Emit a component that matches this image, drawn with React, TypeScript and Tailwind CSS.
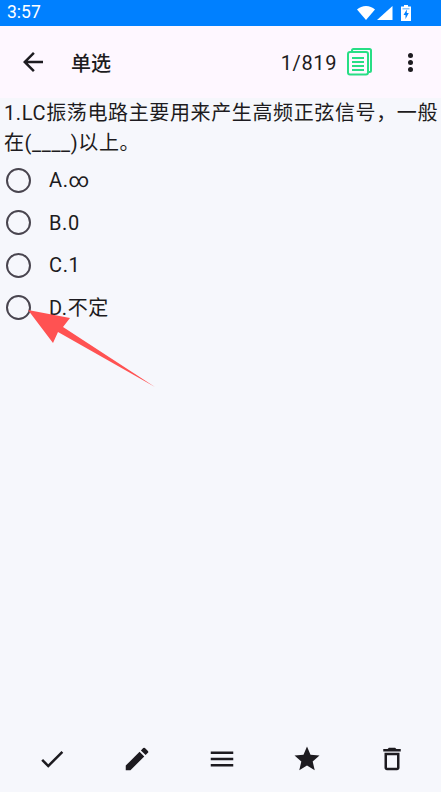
const options = ["A.∞", "B.0", "C.1", "D.不定"];

function Icon({ d, size = 30, className = "" }: { d: string; size?: number; className?: string }) {
  return (
    <svg width={size} height={size} viewBox="0 0 24 24" fill="currentColor" className={className}>
      <path d={d} />
    </svg>
  );
}

const toolbarIcons = [
  "M9 16.17 4.83 12l-1.42 1.41L9 19 21 7l-1.41-1.41z",
  "M3 17.25V21h3.75L17.81 9.94l-3.75-3.75L3 17.25zM20.71 7.04a1 1 0 0 0 0-1.41l-2.34-2.34a1 1 0 0 0-1.41 0l-1.83 1.83 3.75 3.75 1.83-1.83z",
  "M3 18h18v-2H3v2zm0-5h18v-2H3v2zm0-7v2h18V6H3z",
  "M12 17.27 18.18 21l-1.64-7.03L22 9.24l-7.19-.61L12 2 9.19 8.63 2 9.24l5.46 4.73L5.82 21z",
  "M16 9v10H8V9h8m-1.5-6h-5l-1 1H5v2h14V4h-3.5l-1-1zM18 7H6v12c0 1.1.9 2 2 2h8c1.1 0 2-.9 2-2V7z",
];

export default function App() {
  return (
    <div className="relative flex h-[792px] w-[441px] flex-col overflow-hidden bg-[#f6f7fc] font-['Roboto','Noto_Sans_CJK_SC',sans-serif] text-[#1d1b20]">
      {/* Status bar */}
      <div className="flex h-[26px] items-center justify-between bg-[#0080ff] pl-[7px] pr-[30px] text-white">
        <span className="text-[17.500px] leading-none">3:57</span>
        <div className="flex items-center gap-[2px]">
          <svg width="18" height="14" viewBox="0 0 18 14" fill="currentColor">
            <path d="M0 3.500C2.500 1.300 5.600 0 9 0s6.500 1.300 9 3.500L9 14z" />
          </svg>
          <svg width="16" height="14" viewBox="0 0 16 14" fill="currentColor">
            <path d="M15.500 0v14H0z" />
          </svg>
          <svg width="10" height="16" viewBox="0 0 10 16" className="ml-[6px]">
            <path fill="currentColor" d="M3 0h4v1.500h3V16H0V1.500h3z" />
            <path fill="#0080ff" d="M1.500 3h7v1.500h-7z" opacity="0.45" />
            <path fill="#0080ff" d="M5.800 4.500 2.500 10h2v4L7.800 8h-2z" />
          </svg>
        </div>
      </div>

      {/* App bar */}
      <div className="flex h-[72px] items-center bg-[#fef7ff] pl-[18px] pr-[28px]">
        <Icon d="M20 11H7.830l5.590-5.590L12 4l-8 8 8 8 1.410-1.410L7.830 13H20v-2z" />
        <span className="ml-[23px] mt-[3px] text-[20px] font-medium leading-none">单选</span>
        <span className="ml-auto mt-[2px] text-[20px] leading-none tracking-[0.625px]">1/819</span>
        <svg width="26" height="28" viewBox="0 0 26 28" fill="none" stroke="#28de85" strokeWidth="2" className="ml-[10px]">
          <path d="M5 3V2.500A1.500 1.500 0 0 1 6.500 1h16A1.500 1.500 0 0 1 24 2.500v20a1.500 1.500 0 0 1-1.500 1.500H21" />
          <rect x="1" y="4" width="20" height="22.500" rx="2" />
          <path d="M5 10h12M5 14h12M5 18h12M5 22h12" />
        </svg>
        <div className="ml-[35px] flex flex-col gap-[2px]">
          <span className="h-[5px] w-[5px] rounded-full bg-[#1d1b20]" />
          <span className="h-[5px] w-[5px] rounded-full bg-[#1d1b20]" />
          <span className="h-[5px] w-[5px] rounded-full bg-[#1d1b20]" />
        </div>
      </div>

      {/* Question */}
      <p className="pl-[4px] text-[20px] leading-[30px] tracking-[0.625px]">
        1.LC振荡电路主要用来产生高频正弦信号，一般在(____)以上。
      </p>
      <div className="flex flex-col pt-[1px]">
        {options.map((option) => (
          <div key={option} className="flex h-[42.500px] items-center pl-[6px]">
            <span className="h-[25px] w-[25px] rounded-full border-[2.500px] border-[#49454f]" />
            <span className="ml-[18px] text-[20px] leading-none tracking-[0.625px]">{option}</span>
          </div>
        ))}
      </div>

      {/* Bottom toolbar */}
      <div className="mt-auto grid h-[64px] grid-cols-5 items-center pb-[2px] pl-[9.500px] pr-[6.500px]">
        {toolbarIcons.map((d) => (
          <div key={d} className="flex justify-center">
            <Icon d={d} />
          </div>
        ))}
      </div>

      {/* Annotation arrow */}
      <svg width="441" height="792" viewBox="0 0 441 792" className="pointer-events-none absolute left-0 top-0">
        <polygon points="28,310 70,318 63,327 155,387 58,332 53,343" fill="#ff5252" />
      </svg>
    </div>
  );
}
